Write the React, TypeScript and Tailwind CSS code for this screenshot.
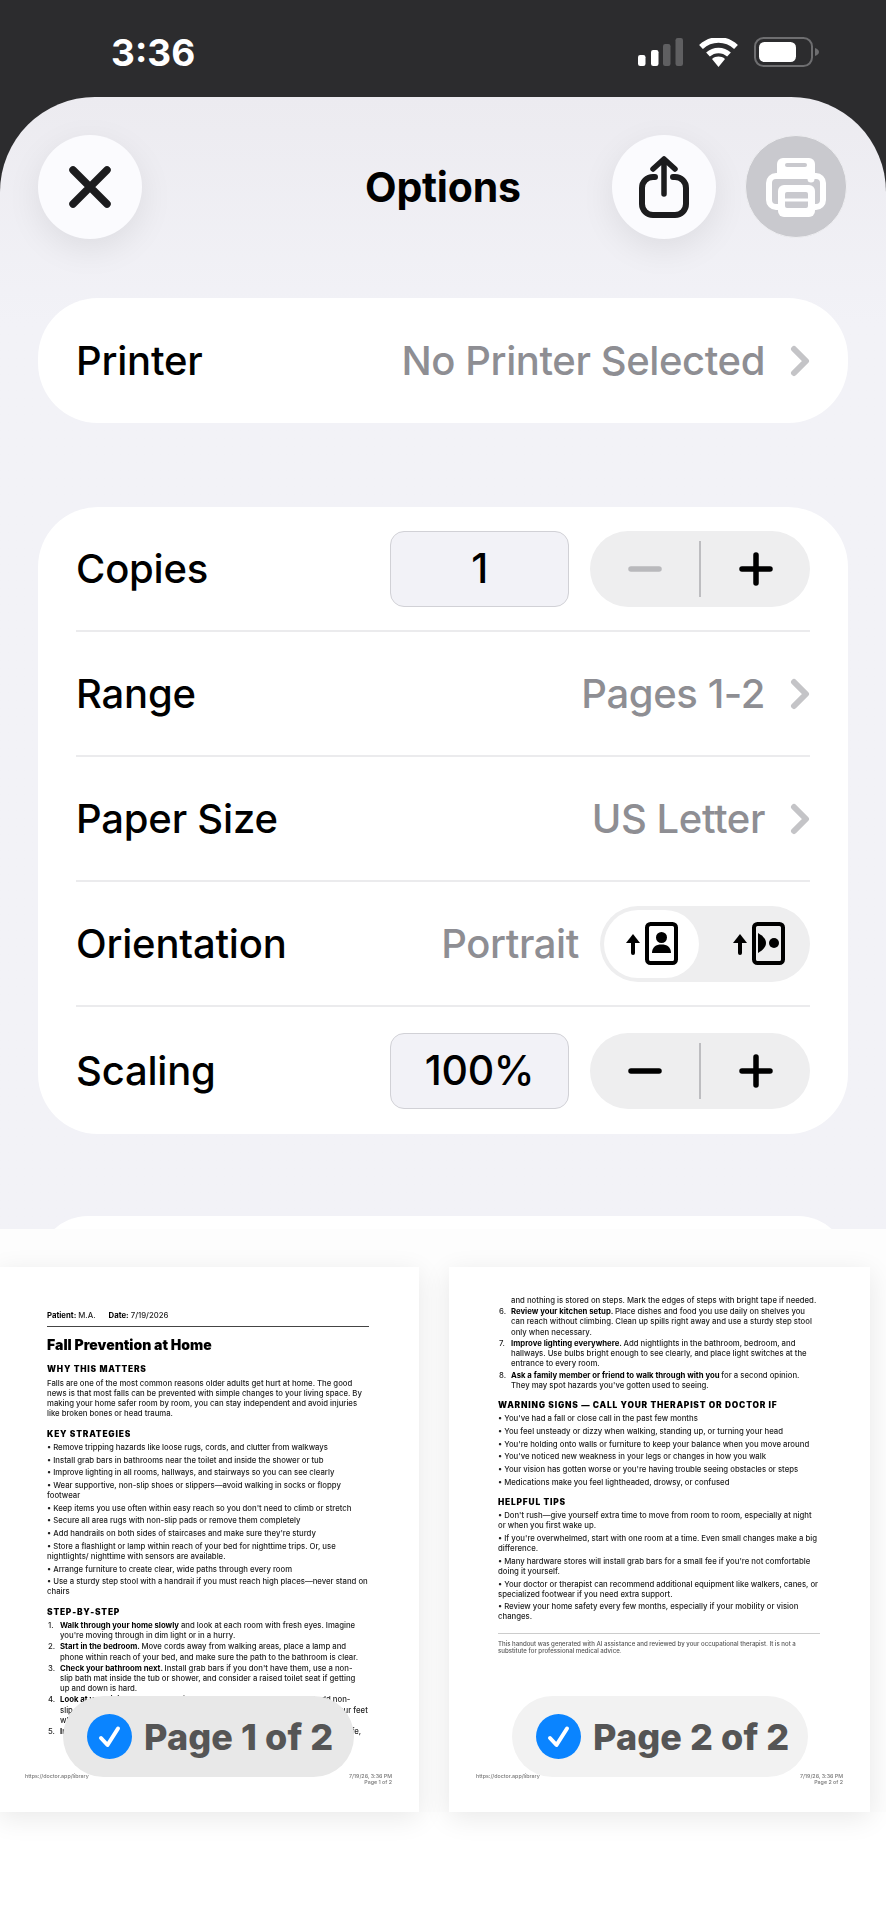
import type { ReactNode } from "react";

const ui = "font-['Inter',sans-serif]";

const strategies = [
  ["Remove tripping hazards like loose rugs, cords, and clutter from walkways"],
  ["Install grab bars in bathrooms near the toilet and inside the shower or tub"],
  ["Improve lighting in all rooms, hallways, and stairways so you can see clearly"],
  ["Wear supportive, non-slip shoes or slippers—avoid walking in socks or floppy", "footwear"],
  ["Keep items you use often within easy reach so you don't need to climb or stretch"],
  ["Secure all area rugs with non-slip pads or remove them completely"],
  ["Add handrails on both sides of staircases and make sure they're sturdy"],
  ["Store a flashlight or lamp within reach of your bed for nighttime trips. Or, use", "nightlights/ nighttime with sensors are available."],
  ["Arrange furniture to create clear, wide paths through every room"],
  ["Use a sturdy step stool with a handrail if you must reach high places—never stand on", "chairs"],
];

const warnings = [
  ["You've had a fall or close call in the past few months"],
  ["You feel unsteady or dizzy when walking, standing up, or turning your head"],
  ["You're holding onto walls or furniture to keep your balance when you move around"],
  ["You've noticed new weakness in your legs or changes in how you walk"],
  ["Your vision has gotten worse or you're having trouble seeing obstacles or steps"],
  ["Medications make you feel lightheaded, drowsy, or confused"],
];

const tips = [
  ["Don't rush—give yourself extra time to move from room to room, especially at night", "or when you first wake up."],
  ["If you're overwhelmed, start with one room at a time. Even small changes make a big", "difference."],
  ["Many hardware stores will install grab bars for a small fee if you're not comfortable", "doing it yourself."],
  ["Your doctor or therapist can recommend additional equipment like walkers, canes, or", "specialized footwear if you need extra support."],
  ["Review your home safety every few months, especially if your mobility or vision", "changes."],
];

function Bullets({ items }: { items: string[][] }) {
  return (
    <div className="mt-[3px] flex flex-col gap-[2.6px]">
      {items.map((lines) => (
        <div key={lines[0]}>
          {lines.map((line, i) => (
            <div key={line} className="h-[10.1px] whitespace-nowrap">
              {i === 0 ? "• " : ""}
              {line}
            </div>
          ))}
        </div>
      ))}
    </div>
  );
}

function Heading({ children }: { children: ReactNode }) {
  return <div className="mt-[10.5px] h-[10px] text-[8.4px] leading-[10px] font-black tracking-[0.8px] whitespace-nowrap text-black">{children}</div>;
}

function Step({ n, bold, lines }: { n: number; bold: string; lines: string[] }) {
  return (
    <div className="relative pl-[13px]">
      <span className="absolute left-[1px] top-0">{n}.</span>
      {lines.map((line, i) => (
        <div key={line} className="h-[10.1px] whitespace-nowrap">
          {i === 0 ? <b className="font-bold text-black">{bold} </b> : null}
          {line}
        </div>
      ))}
    </div>
  );
}

function PageFooter({ page }: { page: number }) {
  return (
    <div className="mt-auto mb-[27px] flex justify-between px-[27px] text-[5.3px] leading-[6px] text-[#777] blur-[0.3px]">
      <span>https://doctor.app/library</span>
      <span className="text-right">
        7/19/26, 3:36 PM
        <br />
        Page {page} of 2
      </span>
    </div>
  );
}

function PagePill({ page, className }: { page: number; className: string }) {
  return (
    <div className={`absolute top-[429px] flex h-[81px] items-center rounded-full pl-[24px] ${className}`}>
      <svg width="45" height="45" viewBox="0 0 45 45" aria-hidden="true">
        <circle cx="22.5" cy="22.5" r="22.5" fill="#0a84ff" />
        <path d="M14 24l6.5 7L31 14.5" fill="none" stroke="#fff" strokeWidth="4" strokeLinecap="round" strokeLinejoin="round" />
      </svg>
      <span className="ml-[12px] text-[36px] leading-none font-extrabold tracking-[0.1px] whitespace-nowrap text-[#555]">Page {page} of 2</span>
    </div>
  );
}

function Chevron() {
  return (
    <svg width="20" height="32" viewBox="0 0 20 32" aria-hidden="true" className="ml-[25px] shrink-0">
      <path d="M4 4l12 12L4 28" fill="none" stroke="#c4c4c7" strokeWidth="6" strokeLinecap="round" strokeLinejoin="round" />
    </svg>
  );
}

function Stepper({ minusOff }: { minusOff?: boolean }) {
  const minus = minusOff ? "#b9b9bc" : "#000";
  return (
    <div className="ml-[21px] flex h-[76px] w-[220px] items-center rounded-full bg-[#eeeeef]">
      <div className="flex flex-1 items-center justify-center">
        <svg width="34" height="8" viewBox="0 0 34 8" aria-hidden="true">
          <path d="M3 4h28" stroke={minus} strokeWidth="5.5" strokeLinecap="round" />
        </svg>
      </div>
      <div className="h-[56px] w-[2px] bg-[#bdbdc0]" />
      <div className="flex flex-1 items-center justify-center">
        <svg width="34" height="34" viewBox="0 0 34 34" aria-hidden="true">
          <path d="M3 17h28M17 3v28" stroke="#000" strokeWidth="5.5" strokeLinecap="round" />
        </svg>
      </div>
    </div>
  );
}

function NumberBox({ value }: { value: string }) {
  return (
    <div className="flex h-[76px] w-[179px] items-center justify-center rounded-[14px] border border-[#d1d1d6] bg-[#f2f2f7] text-[41px] font-medium tracking-[-0.3px] text-black">
      {value}
    </div>
  );
}

function OrientationIcon({ landscape }: { landscape?: boolean }) {
  return (
    <svg width="52" height="43" viewBox="0 0 52 43" aria-hidden="true">
      <path d="M7 31V18" stroke="#000" strokeWidth="4" strokeLinecap="round" />
      <path d="M0 21l7-9 7 9z" fill="#000" />
      <rect x="21" y="2" width="29" height="39" rx="3.5" fill="none" stroke="#000" strokeWidth="4" />
      {landscape ? (
        <>
          <path d="M25 11c5 3 8 6 8 10s-3 7-8 10z" fill="#000" />
          <circle cx="41" cy="21" r="5" fill="#000" />
        </>
      ) : (
        <>
          <circle cx="35.5" cy="15.500" r="5.500" fill="#000" />
          <path d="M26 31c0-6 4-8.500 9.500-8.500S45 25 45 31z" fill="#000" />
        </>
      )}
    </svg>
  );
}

function Row({ label, last, children }: { label: string; last?: boolean; children: ReactNode }) {
  return (
    <div className={`flex items-center justify-between ${last ? "h-[127px]" : "h-[125px] border-b-2 border-[#ebebed]"}`}>
      <span className="text-[40px] font-medium tracking-[-0.2px] text-black">{label}</span>
      <div className="flex items-center text-[40px] font-medium tracking-[-0.4px] text-[#8e8e93]">{children}</div>
    </div>
  );
}

function RoundButton({ children }: { children: ReactNode }) {
  return (
    <div className="flex h-[104px] w-[104px] items-center justify-center rounded-full bg-[#fbfbfe] shadow-[0_10px_34px_rgba(0,0,0,0.08)]">
      {children}
    </div>
  );
}

export default function App() {
  return (
    <div className={`${ui} w-[886px] h-[1920px] overflow-hidden bg-white`}>
      <div className="bg-[#2c2c2e]">
        <div className="flex h-[97px] items-start justify-between pl-[111px] pr-[67px] pt-[31px]">
          <span className="text-[37px] leading-[44px] font-bold text-white">3:36</span>
          <div className="flex items-center gap-[16px] pt-[6px]">
            <svg width="45" height="28" viewBox="0 0 45 28" aria-hidden="true">
              <rect x="0" y="17" width="7.500" height="11" rx="2.200" fill="#fff" />
              <rect x="13" y="12" width="7.500" height="16" rx="2.200" fill="#fff" />
              <rect x="25" y="6" width="7.500" height="22" rx="2.200" fill="#5f5f61" />
              <rect x="37.500" y="0" width="7.500" height="28" rx="2.200" fill="#5f5f61" />
            </svg>
            <svg width="39" height="29" viewBox="0 0 39 29" aria-hidden="true">
              <path d="M19.500 29l-6.500-8c3.800-3.200 9.200-3.200 13 0z" fill="#fff" />
              <path d="M9 16.500c6-5.500 15-5.500 21 0" fill="none" stroke="#fff" strokeWidth="5.500" />
              <path d="M2 9c10-9.500 25-9.500 35 0" fill="none" stroke="#fff" strokeWidth="5.500" />
            </svg>
            <svg width="65" height="30" viewBox="0 0 65 30" aria-hidden="true">
              <rect x="1" y="1" width="57" height="28" rx="8.500" fill="none" stroke="#6e6e70" strokeWidth="2" />
              <rect x="5" y="5" width="37" height="20" rx="5.500" fill="#fff" />
              <path d="M61 11c2.500 1 4 2.200 4 4s-1.500 3-4 4z" fill="#6e6e70" />
            </svg>
          </div>
        </div>
        <div className="h-[1132px] overflow-hidden rounded-t-[95px] bg-gradient-to-b from-[#ecebf0] to-[#f2f2f7] to-[20%] px-[38px] pt-[38px]">
          <div className="relative flex items-center justify-between">
            <RoundButton>
              <svg width="44" height="44" viewBox="0 0 44 44" aria-hidden="true">
                <path d="M5 5l34 34M39 5L5 39" stroke="#1c1c1e" strokeWidth="7.500" strokeLinecap="round" />
              </svg>
            </RoundButton>
            <span className="absolute left-[327px] top-[30px] text-[41px] leading-[44px] font-bold tracking-[-0.2px] text-black">Options</span>
            <div className="flex gap-[29px] pr-[1px]">
              <RoundButton>
                <svg width="50" height="62" viewBox="0 0 50 62" aria-hidden="true">
                  <path d="M16 21h-2a11 11 0 0 0-11 11v16a11 11 0 0 0 11 11h22a11 11 0 0 0 11-11V32a11 11 0 0 0-11-11h-2" fill="none" stroke="#1c1c1e" strokeWidth="6" strokeLinecap="round" />
                  <path d="M25 38V4M14 13L25 3l11 10" fill="none" stroke="#1c1c1e" strokeWidth="5.500" strokeLinecap="round" strokeLinejoin="round" />
                </svg>
              </RoundButton>
              <div className="flex h-[103px] w-[102px] items-center justify-center rounded-full border border-[#eeeef1] bg-[#c9c9ce]">
                <svg width="60" height="60" viewBox="0 0 60 60" aria-hidden="true">
                  <path d="M11 20V7a6 6 0 0 1 6-6h26a6 6 0 0 1 6 6v13z" fill="#fff" />
                  <rect x="19" y="6" width="22" height="4" rx="2" fill="#c9c9ce" />
                  <rect x="3" y="19" width="54" height="31" rx="7" fill="#c9c9ce" stroke="#fff" strokeWidth="6" />
                  <circle cx="45" cy="22" r="3.500" fill="#fff" />
                  <rect x="12" y="28" width="37" height="32" rx="6" fill="#fff" />
                  <rect x="19" y="35" width="23" height="16" rx="2" fill="#c9c9ce" />
                  <path d="M19 43h23" stroke="#fff" strokeWidth="3" />
                </svg>
              </div>
            </div>
          </div>

          <div className="mt-[59px] flex h-[125px] items-center justify-between rounded-[60px] bg-white px-[38px]">
            <span className="text-[40px] font-medium tracking-[-0.2px] text-black">Printer</span>
            <div className="flex items-center text-[40px] font-medium tracking-[-0.4px] text-[#8e8e93]">
              No Printer Selected
              <Chevron />
            </div>
          </div>

          <div className="mt-[84px] rounded-[60px] bg-white px-[38px]">
            <Row label="Copies">
              <NumberBox value="1" />
              <Stepper minusOff />
            </Row>
            <Row label="Range">
              Pages 1-2
              <Chevron />
            </Row>
            <Row label="Paper Size">
              US Letter
              <Chevron />
            </Row>
            <Row label="Orientation">
              Portrait
              <div className="ml-[21px] flex h-[76px] w-[210px] items-center rounded-full bg-[#eeeeef] p-[4px]">
                <div className="flex h-[68px] w-[95px] items-center justify-center rounded-full bg-white">
                  <OrientationIcon />
                </div>
                <div className="flex flex-1 items-center justify-center pl-[12px]">
                  <OrientationIcon landscape />
                </div>
              </div>
            </Row>
            <Row label="Scaling" last>
              <NumberBox value="100%" />
              <Stepper />
            </Row>
          </div>

          <div className="mt-[82px] h-[100px] rounded-[60px] bg-white" />
        </div>
      </div>

      <div className="flex gap-[30px] bg-[#fdfdfd] pt-[38px] pl-0">
        <div className="relative -ml-[2px] flex h-[545px] w-[421px] shrink-0 flex-col bg-white text-[7.75px] leading-[10.1px] font-medium text-[#222] shadow-[0_6px_26px_rgba(0,0,0,0.09)]">
          <div className="px-[49px] pt-[43px] blur-[0.35px]">
            <div className="h-[10px] whitespace-nowrap">
              <b className="font-bold text-black">Patient:</b> M.A. <span className="ml-[11px]"><b className="font-bold text-black">Date:</b> 7/19/2026</span>
            </div>
            <div className="mt-[5.500px] h-[1px] w-[322px] bg-[#444]" />
            <div className="mt-[9px] h-[18px] text-[14px] leading-[18px] font-black whitespace-nowrap text-black">Fall Prevention at Home</div>
            <Heading>WHY THIS MATTERS</Heading>
            <div className="mt-[4px] whitespace-nowrap">
              Falls are one of the most common reasons older adults get hurt at home. The good
              <br />
              news is that most falls can be prevented with simple changes to your living space. By
              <br />
              making your home safer room by room, you can stay independent and avoid injuries
              <br />
              like broken bones or head trauma.
            </div>
            <Heading>KEY STRATEGIES</Heading>
            <Bullets items={strategies} />
            <Heading>STEP-BY-STEP</Heading>
            <div className="mt-[3px] flex flex-col gap-[1.300px]">
              <Step n={1} bold="Walk through your home slowly" lines={["and look at each room with fresh eyes. Imagine", "you're moving through in dim light or in a hurry."]} />
              <Step n={2} bold="Start in the bedroom." lines={["Move cords away from walking areas, place a lamp and", "phone within reach of your bed, and make sure the path to the bathroom is clear."]} />
              <Step n={3} bold="Check your bathroom next." lines={["Install grab bars if you don't have them, use a non-", "slip bath mat inside the tub or shower, and consider a raised toilet seat if getting", "up and down is hard."]} />
              <Step n={4} bold="Look at your living room." lines={["Clear wide walkways through the room and add non-", "slip pads under any rugs you keep. Choose chairs that let you rest both of your feet", "while sitting comfortably."]} />
              <Step n={5} bold="Inspect your stairs." lines={["Make sure handrails are secure on both sides, steps are safe,"]} />
            </div>
          </div>
          <PageFooter page={1} />
          <PagePill page={1} className="left-[65px] w-[291px] bg-[#e8e8e8]" />
        </div>

        <div className="relative flex h-[545px] w-[421px] shrink-0 flex-col bg-white text-[7.75px] leading-[10.1px] font-medium text-[#222] shadow-[0_6px_26px_rgba(0,0,0,0.09)]">
          <div className="px-[49px] pt-[28px] blur-[0.35px]">
            <div className="flex flex-col gap-[1.300px]">
              <div className="h-[10.100px] pl-[13px] whitespace-nowrap">and nothing is stored on steps. Mark the edges of steps with bright tape if needed.</div>
              <Step n={6} bold="Review your kitchen setup." lines={["Place dishes and food you use daily on shelves you", "can reach without climbing. Clean up spills right away and use a sturdy step stool", "only when necessary."]} />
              <Step n={7} bold="Improve lighting everywhere." lines={["Add nightlights in the bathroom, bedroom, and", "hallways. Use bulbs bright enough to see clearly, and place light switches at the", "entrance to every room."]} />
              <Step n={8} bold="Ask a family member or friend to walk through with you" lines={["for a second opinion.", "They may spot hazards you've gotten used to seeing."]} />
            </div>
            <Heading>WARNING SIGNS — CALL YOUR THERAPIST OR DOCTOR IF</Heading>
            <Bullets items={warnings} />
            <Heading>HELPFUL TIPS</Heading>
            <Bullets items={tips} />
            <div className="mt-[11px] h-[1px] w-[322px] bg-[#ccc]" />
            <div className="mt-[6px] text-[6.1px] leading-[7.700px] whitespace-nowrap text-[#555]">
              This handout was generated with AI assistance and reviewed by your occupational therapist. It is not a
              <br />
              substitute for professional medical advice.
            </div>
          </div>
          <PageFooter page={2} />
          <PagePill page={2} className="left-[63px] w-[296px] bg-[#f2f2f2]" />
        </div>
      </div>
    </div>
  );
}
